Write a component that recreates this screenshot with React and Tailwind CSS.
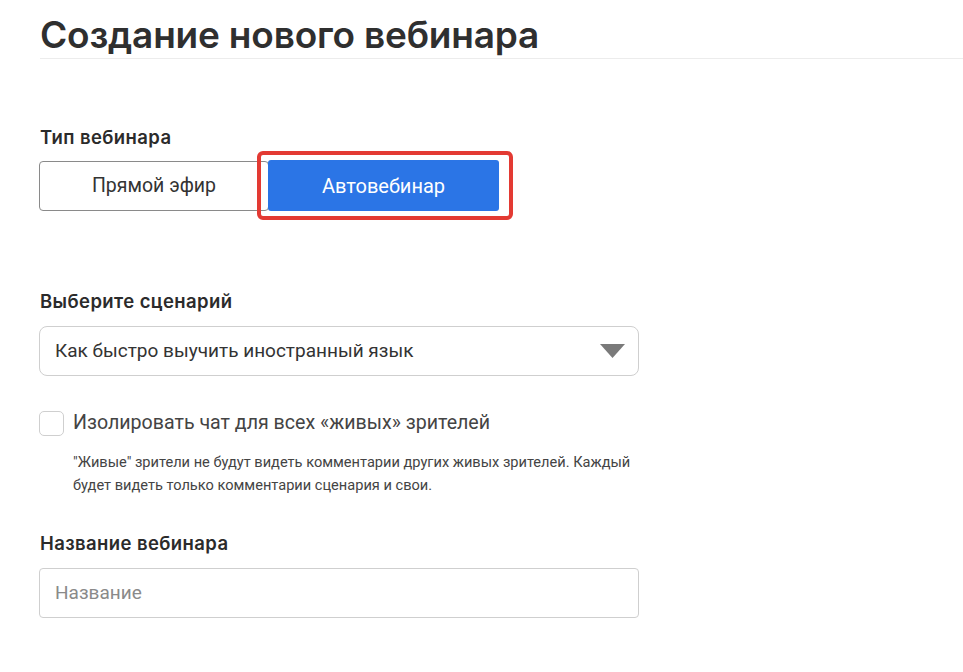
import React from "react";

export default function App() {
  return (
    <div className="min-h-[672px] w-[963px] bg-white text-[#333]" style={{ fontFamily: "Roboto, 'Noto Sans', sans-serif" }}>
      <div className="pl-[40px]">
        <h1 className="pt-[13px] text-[37px] font-semibold leading-[44px] text-[#2f2f2f] tracking-[-0.2px]" style={{ fontFamily: "Inter, 'Noto Sans', sans-serif" }}>
          Создание нового вебинара
        </h1>
        <div className="mt-[1px] h-px bg-[#ececec]" />

        <div className="mt-[66px] text-[18.5px] font-semibold leading-[24px] tracking-[0.4px] text-[#2b2b2b]" style={{ fontFamily: "Inter, 'Noto Sans', sans-serif" }}>
          Тип вебинара
        </div>
        <div className="mt-[11px] flex items-center">
          <div className="ml-[-1px] flex h-[50px] w-[230px] items-center justify-center rounded-[4px] border border-[#8a8a8a] text-[19.5px] text-[#333]">
            Прямой эфир
          </div>
          <div className="relative -ml-px">
            <div className="flex h-[51px] w-[231px] items-center justify-center rounded-[3px] bg-[#2b75e6] text-[20px] text-white">
              Автовебинар
            </div>
            <div className="pointer-events-none absolute left-[-11px] right-[-14px] top-[-9px] bottom-[-9px] rounded-[6px] border-[4px] border-[#e33a33]" />
          </div>
        </div>

        <div className="mt-[78px] text-[18.5px] font-semibold leading-[24px] tracking-[0.4px] text-[#2b2b2b]" style={{ fontFamily: "Inter, 'Noto Sans', sans-serif" }}>
          Выберите сценарий
        </div>
        <div className="mt-[13px] ml-[-1px] flex h-[50px] w-[600px] items-center justify-between rounded-[8px] border border-[#cfcfcf] pl-[15px] pr-[13px]">
          <span className="text-[19px] text-[#333]">Как быстро выучить иностранный язык</span>
          <svg width="25" height="14" viewBox="0 0 25 14">
            <polygon points="0,0 25,0 12.5,14" fill="#7a7a7a" />
          </svg>
        </div>

        <div className="mt-[34px] flex items-center">
          <div className="ml-[-1px] h-[25px] w-[25px] rounded-[5px] border border-[#cfcfcf] bg-white" />
          <span className="ml-[9px] text-[19.6px] leading-[26px] text-[#444]">Изолировать чат для всех «живых» зрителей</span>
        </div>
        <div className="mt-[15px] ml-[33px] w-[600px] text-[14.6px] leading-[23px] text-[#444]">
          "Живые" зрители не будут видеть комментарии других живых зрителей. Каждый
          <br />
          будет видеть только комментарии сценария и свои.
        </div>

        <div className="mt-[34px] text-[18.5px] font-semibold leading-[24px] tracking-[0.4px] text-[#2b2b2b]" style={{ fontFamily: "Inter, 'Noto Sans', sans-serif" }}>
          Название вебинара
        </div>
        <div className="mt-[13px] ml-[-1px] flex h-[50px] w-[600px] items-center rounded-[4px] border border-[#cfcfcf] pl-[15px]">
          <span className="text-[19px] text-[#8a8a8a]">Название</span>
        </div>
      </div>
    </div>
  );
}
